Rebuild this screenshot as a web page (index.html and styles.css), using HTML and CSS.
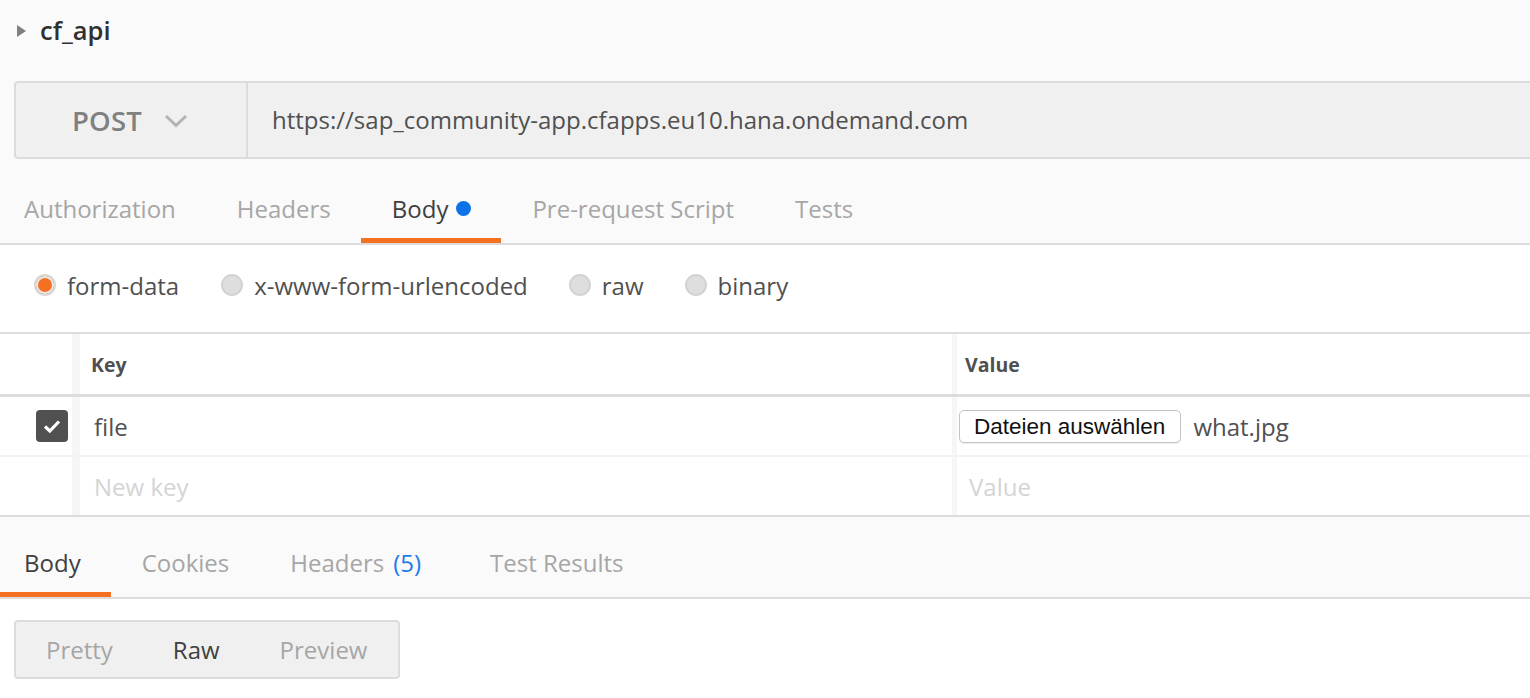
FILE: index.html
```html
<!DOCTYPE html>
<html>
<head>
<meta charset="utf-8">
<link rel="stylesheet" href="styles.css">
</head>
<body>
<div class="collection">
  <svg class="caret" width="9" height="12" viewBox="0 0 9 12"><path d="M0 0 L9 6 L0 12 Z" fill="#808080"/></svg>
  <span class="coll-name">cf_api</span>
</div>
<div class="request-bar">
  <div class="method">
    <span class="method-name">POST</span>
    <svg class="chev" width="24" height="14" viewBox="0 0 24 14"><path d="M2 2 L12 11.5 L22 2" fill="none" stroke="#b3b3b3" stroke-width="3"/></svg>
  </div>
  <div class="url">https://sap_community-app.cfapps.eu10.hana.ondemand.com</div>
</div>
<div class="tabs req-tabs">
  <div class="tab first">Authorization</div>
  <div class="tab">Headers</div>
  <div class="tab active">Body <span class="dot"></span></div>
  <div class="tab">Pre-request Script</div>
  <div class="tab">Tests</div>
</div>
<div class="body-modes">
  <label class="radio"><span class="circle on"></span>form-data</label>
  <label class="radio"><span class="circle"></span>x-www-form-urlencoded</label>
  <label class="radio"><span class="circle"></span>raw</label>
  <label class="radio"><span class="circle"></span>binary</label>
</div>
<div class="kv">
  <div class="kv-row head">
    <div class="c-check"></div>
    <div class="c-key">Key</div>
    <div class="c-val">Value</div>
  </div>
  <div class="kv-row data">
    <div class="c-check"><span class="checkbox"><svg width="18" height="14" viewBox="0 0 18 14"><path d="M2 7.5 L6.8 12 L16 2.5" fill="none" stroke="#fff" stroke-width="3.2"/></svg></span></div>
    <div class="c-key">file</div>
    <div class="c-val"><span class="filebtn">Dateien auswählen</span><span class="fname">what.jpg</span></div>
  </div>
  <div class="kv-row new">
    <div class="c-check"></div>
    <div class="c-key ph">New key</div>
    <div class="c-val ph">Value</div>
  </div>
</div>
<div class="tabs resp-tabs">
  <div class="tab first active">Body</div>
  <div class="tab">Cookies</div>
  <div class="tab">Headers <span class="count">(5)</span></div>
  <div class="tab">Test Results</div>
</div>
<div class="resp-body">
  <div class="seg">
    <div class="seg-item">Pretty</div>
    <div class="seg-item sel">Raw</div>
    <div class="seg-item">Preview</div>
  </div>
</div>
</body>
</html>
```
FILE: styles.css
```css
html, body {
  margin: 0;
  padding: 0;
  background: #fafafa;
  font-family: "Open Sans", "Liberation Sans", sans-serif;
  color: #505050;
  overflow: hidden;
}
.collection {
  height: 62px;
  display: flex;
  align-items: center;
  padding-left: 17px;
}
.caret { margin-right: 14px; }
.coll-name {
  font-size: 25.5px;
  font-weight: 600;
  color: #303030;
  position: relative;
  top: -1px;
}
.request-bar {
  margin: 19px 0 0 14px;
  height: 74px;
  border: 2px solid #dcdcdc;
  border-right: none;
  border-radius: 4px 0 0 4px;
  background: #f0f0f0;
  display: flex;
  align-items: stretch;
}
.method {
  width: 232px;
  border-right: 2px solid #dcdcdc;
  display: flex;
  align-items: center;
  justify-content: center;
  gap: 22px;
  padding-right: 2px;
  box-sizing: border-box;
}
.method-name {
  font-size: 27.5px;
  font-weight: 600;
  color: #808080;
  letter-spacing: 0.2px;
}
.chev { margin-top: 2px; }
.url {
  display: flex;
  align-items: center;
  padding-left: 24px;
  font-size: 24px;
  color: #505050;
  padding-bottom: 1px;
}
.tabs {
  display: flex;
  border-bottom: 2px solid #dcdcdc;
  background: #fafafa;
}
.req-tabs { height: 84px; }
.resp-tabs { height: 80px; }
.tab {
  display: flex;
  align-items: center;
  padding: 0 30px 0 31px;
  font-size: 24px;
  color: #a6a6a6;
  border-bottom: 5px solid transparent;
  padding-top: 19px;
  box-sizing: border-box;
}
.resp-tabs .tab { padding-top: 15px; }
.tab.first { padding-left: 24px; }
.tab.active {
  color: #404040;
  border-bottom-color: #f47023;
}
.dot {
  display: inline-block;
  width: 15px;
  height: 15px;
  border-radius: 50%;
  background: #0b72e7;
  margin-left: 8px;
}
.count { color: #1a7ce8; margin-left: 9px; margin-right: 8px; }
.body-modes {
  height: 87px;
  box-sizing: border-box;
  background: #fff;
  display: flex;
  align-items: center;
  padding-left: 34px;
  padding-bottom: 7px;
  gap: 41px;
}
.radio {
  display: flex;
  align-items: center;
  font-size: 24px;
  color: #505050;
}
.radio:nth-child(2) { margin-left: 1px; }
.circle {
  width: 18px;
  height: 18px;
  border-radius: 50%;
  border: 2px solid #d3d3d3;
  background: #dedede;
  margin-right: 11px;
  box-sizing: content-box;
}
.circle.on {
  background: #f47023;
  box-shadow: inset 0 0 0 2px #ececec;
  border-color: #d8d8d8;
}
.kv {
  background: #fff;
  border-top: 2px solid #dcdcdc;
  border-bottom: 2px solid #dcdcdc;
}
.kv-row {
  display: grid;
  grid-template-columns: 72px 880px 1fr;
}
.kv-row.head { height: 60px; border-bottom: 3px solid #dcdcdc; }
.kv-row.data { height: 58px; border-bottom: 2px solid #f3f3f3; }
.kv-row.new { height: 58px; }
.c-check {
  display: flex;
  align-items: center;
  justify-content: flex-end;
  padding-right: 4px;
}
.c-key, .c-val {
  display: flex;
  align-items: center;
  border-left: 8px solid #f6f6f6;
  font-size: 24px;
  color: #505050;
}
.c-key { padding-left: 14px; }
.c-val { border-left-width: 5px; padding-left: 2px; }
.head .c-key, .head .c-val {
  font-size: 19.5px;
  font-weight: 700;
  color: #505050;
  padding-left: 11px;
}
.head .c-val { padding-left: 8px; }
.ph { color: #d4d4d4; }
.new .c-val { padding-left: 12px; }
.checkbox {
  width: 32px;
  height: 32px;
  border-radius: 4px;
  background: #505050;
  display: flex;
  align-items: center;
  justify-content: center;
}
.filebtn {
  font-family: "Liberation Sans", Arial, sans-serif;
  font-size: 22.5px;
  color: #111;
  background: #fff;
  border: 1px solid #c4c4c4;
  border-radius: 5px;
  height: 33px;
  box-sizing: border-box;
  padding: 2px 15px 0 14px;
  display: flex;
  align-items: center;
  box-shadow: 0 1px 1px rgba(0,0,0,0.08);
}
.fname { margin-left: 12px; color: #505050; }
.resp-body {
  background: #fff;
  height: 100px;
  padding: 21px 0 0 14px;
}
.seg {
  display: inline-flex;
  height: 59px;
  width: 386px;
  box-sizing: border-box;
  border: 2px solid #dcdcdc;
  border-radius: 4px;
  background: #f0f0f0;
  align-items: center;
  padding-left: 30px;
}
.seg-item {
  font-size: 24px;
  color: #a6a6a6;
  margin-right: 60px;
}
.seg-item.sel { color: #404040; }
```
